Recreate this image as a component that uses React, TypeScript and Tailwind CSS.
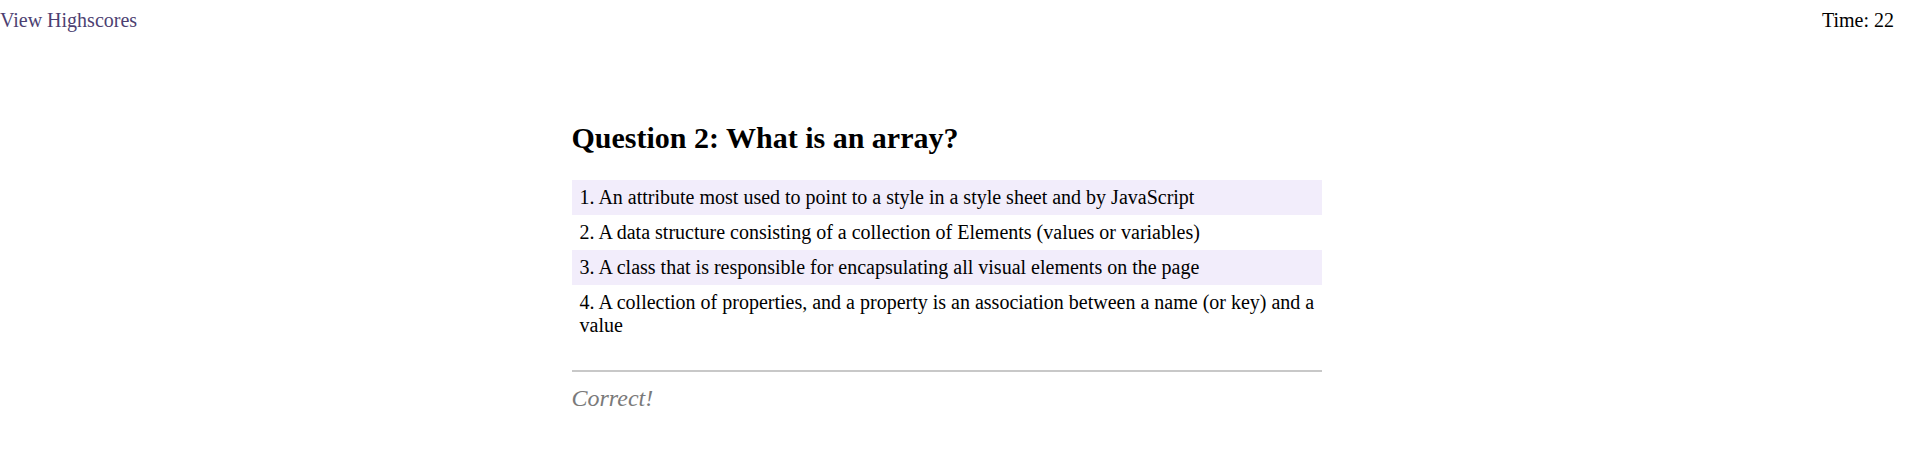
import React from "react";

const answers = [
  "1. An attribute most used to point to a style in a style sheet and by JavaScript",
  "2. A data structure consisting of a collection of Elements (values or variables)",
  "3. A class that is responsible for encapsulating all visual elements on the page",
  "4. A collection of properties, and a property is an association between a name (or key) and a value",
];

export default function App() {
  return (
    <div className="min-h-[466px] bg-white text-black" style={{ fontFamily: '"Liberation Serif", "Times New Roman", serif' }}>
      <header className="flex justify-between items-start pt-[9px] pr-[13px] text-[20px] leading-[23px]">
        <a className="text-[#4d3f72] cursor-pointer">View Highscores</a>
        <span>Time: 22</span>
      </header>
      <main className="mx-auto w-[750px] pt-[89px] -translate-x-[7px]">
        <h2 className="text-[30px] font-bold leading-[34px] mb-[25px]">Question 2: What is an array?</h2>
        <ul className="flex flex-col text-[20px] leading-[23px]">
          {answers.map((a, i) => (
            <li key={i} className={`pl-[8px] pr-0 py-[6px] ${i % 2 === 0 ? "bg-[#f2edfb]" : "bg-white"}`}>
              {a}
            </li>
          ))}
        </ul>
        <div className="mt-[27px] h-[2px] bg-[#c8c8c8]" />
        <p className="mt-[12px] text-[24px] leading-[28px] italic text-[#7a7a7a]">Correct!</p>
      </main>
    </div>
  );
}
